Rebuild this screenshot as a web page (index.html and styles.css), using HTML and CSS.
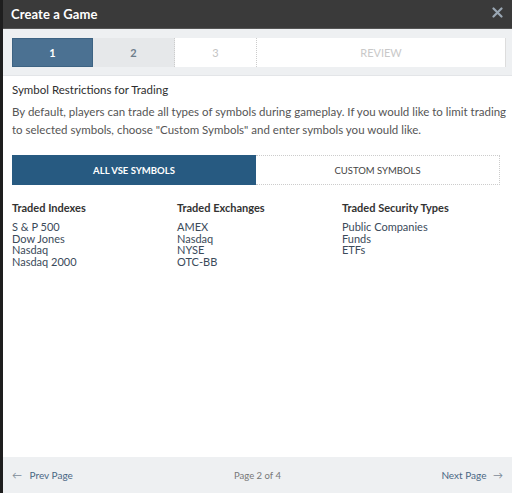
FILE: index.html
```html
<!DOCTYPE html>
<html>
<head>
<meta charset="utf-8">
<link rel="stylesheet" href="styles.css">
</head>
<body>
<div class="modal">
  <header class="head">
    <h1 class="title">Create a Game</h1>
    <span class="close">
      <svg width="11" height="11" viewBox="0 0 11 11"><path d="M1.5 1.5 L9.5 9.5 M9.5 1.5 L1.5 9.5" stroke="#9aa7b3" stroke-width="2.2" stroke-linecap="round"/></svg>
    </span>
  </header>
  <div class="stepbar">
    <div class="steps">
      <div class="step s1">1</div>
      <div class="step s2">2</div>
      <div class="step s3">3</div>
      <div class="step s4">REVIEW</div>
    </div>
  </div>
  <main class="content">
    <h2 class="heading">Symbol Restrictions for Trading</h2>
    <p class="desc">By default, players can trade all types of symbols during gameplay. If you would like to limit trading to selected symbols, choose "Custom Symbols" and enter symbols you would like.</p>
    <div class="tabs">
      <div class="tab active">ALL VSE SYMBOLS</div>
      <div class="tab">CUSTOM SYMBOLS</div>
    </div>
    <div class="cols">
      <div class="col">
        <h3 class="colhead">Traded Indexes</h3>
        <ul class="list"><li>S &amp; P 500</li><li>Dow Jones</li><li>Nasdaq</li><li>Nasdaq 2000</li></ul>
      </div>
      <div class="col">
        <h3 class="colhead">Traded Exchanges</h3>
        <ul class="list"><li>AMEX</li><li>Nasdaq</li><li>NYSE</li><li>OTC-BB</li></ul>
      </div>
      <div class="col">
        <h3 class="colhead">Traded Security Types</h3>
        <ul class="list"><li>Public Companies</li><li>Funds</li><li>ETFs</li></ul>
      </div>
    </div>
  </main>
  <footer class="foot">
    <span class="nav prev"><span class="arrow">&#8592;</span> Prev Page</span>
    <span class="page">Page 2 of 4</span>
    <span class="nav next">Next Page <span class="arrow">&#8594;</span></span>
  </footer>
</div>
</body>
</html>
```

FILE: styles.css
```css
html, body {
  margin: 0;
  padding: 0;
  height: 100%;
}
body {
  background: #1e1e1e;
  font-family: Lato, "Open Sans", sans-serif;
  overflow: hidden;
}
.modal {
  margin-left: 3px;
  width: 509px;
  height: 493px;
  background: #fff;
  display: flex;
  flex-direction: column;
}
.head {
  height: 29px;
  background: #3a3a3a;
  display: flex;
  align-items: center;
  justify-content: space-between;
  padding: 0 9px 0 8px;
  border-bottom: 1px solid #555;
  box-sizing: border-box;
}
.title {
  margin: 0;
  color: #fff;
  font-size: 13px;
  font-weight: 700;
  letter-spacing: 0.1px;
}
.close {
  display: flex;
  margin-top: -3px;
}
.stepbar {
  background: #eef0f2;
  padding: 9px 6px 8px 9px;
  border-bottom: 1px solid #e3e5e8;
}
.steps {
  display: grid;
  grid-template-columns: 81px 82px 82px 1fr;
  height: 29px;
}
.step {
  display: flex;
  align-items: center;
  justify-content: center;
  font-size: 11px;
  color: #c4c4c4;
  background: #fff;
  box-sizing: border-box;
}
.s1 {
  background: #4b7192;
  color: #fff;
  border: 1px solid #3d6383;
  font-weight: 700;
}
.s2 {
  background: #e6e8ea;
  color: #6e7e8c;
  font-weight: 700;
  border-right: 1px dotted #ccc;
}
.s3 {
  border-right: 1px dotted #ccc;
}
.s4 {
  color: #c9c9c9;
  border-right: 1px solid #ddd;
}
.content {
  flex: 1;
  padding: 7px 9px 0 9px;
  color: #333;
}
.heading {
  margin: 0 0 7px;
  font-size: 11.5px;
  font-weight: 400;
  color: #2e2e2e;
}
.desc {
  margin: 0 -8px 0 0;
  font-size: 11.5px;
  line-height: 18px;
  color: #555;
}
.tabs {
  display: grid;
  grid-template-columns: 244px 244px;
  height: 30px;
  margin-top: 16px;
}
.tab {
  display: flex;
  align-items: center;
  justify-content: center;
  font-size: 9.5px;
  color: #444;
  border: 1px dotted #ccc;
  border-left: none;
}
.tab.active {
  background: #275a81;
  color: #fff;
  font-weight: 700;
  border: 1px solid #275a81;
}
.cols {
  display: grid;
  grid-template-columns: 165px 165px 1fr;
  margin-top: 16px;
}
.colhead {
  margin: 0 0 7px;
  font-size: 11px;
  font-weight: 700;
  color: #333;
}
.list {
  list-style: none;
  margin: 0;
  padding: 0;
  font-size: 11px;
  line-height: 11.5px;
  color: #3b4a5a;
}
.foot {
  height: 36px;
  background: #eef0f2;
  display: grid;
  grid-template-columns: 1fr auto 1fr;
  align-items: center;
  padding: 0 9px;
  font-size: 10px;
}
.nav {
  color: #4a6784;
}
.next {
  justify-self: end;
}
.arrow {
  color: #7d8b98;
  margin: 0 5px 0 0;
}
.next .arrow {
  margin: 0 0 0 4px;
}
.page {
  color: #777;
  font-size: 9.5px;
}
```
